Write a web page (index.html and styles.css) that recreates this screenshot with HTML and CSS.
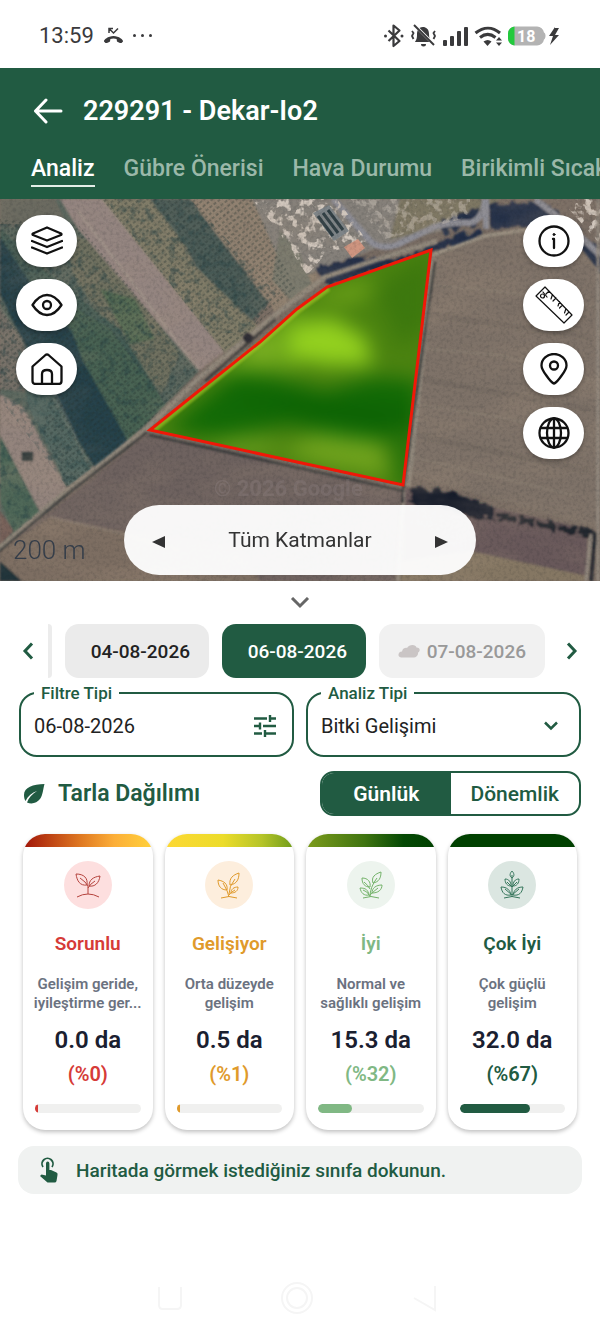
FILE: index.html
```
<!DOCTYPE html>
<html lang="tr">
<head>
    <meta charset="UTF-8">
    <meta name="viewport" content="width=device-width, initial-scale=1">
    <title>229291 - Dekar-Io2</title>
    <link rel="stylesheet" href="styles.css">
</head>
<body>
    <div class="status">
        <span class="status-time">13:59</span>
        <svg width="21" height="18" viewBox="0 0 21 18"><path d="M1 14.500c-.5-1.500 4-5.500 9.500-5.500s10 4 9.500 5.500l-1.500 1.500c-1 .4-3.500-.8-4.500-1.600l-.4-2.400c-2-.7-4.200-.7-6.200 0l-.4 2.400c-1 .8-3.500 2-4.500 1.600z" fill="#3a3a3c"/><path d="M6 6V1.500h4M6.500 2l4 4L15 1.500" fill="none" stroke="#3a3a3c" stroke-width="1.500"/></svg>
        <span class="status-more"><i></i><i></i><i></i></span>
        <svg class="status-icons" width="178" height="26" viewBox="0 0 178 26" fill="none" stroke="#3a3a3c">
            <path d="M5.500 7.500l11 10.500-6 5V2.500l6 5-11 10.500" stroke-width="2.200" stroke-linejoin="round"/>
            <circle cx="2.500" cy="13" r="1.500" fill="#3a3a3c" stroke="none"/><circle cx="19" cy="13" r="1.500" fill="#3a3a3c" stroke="none"/>
            <path d="M32 19h17c-2-2-3-4-3-8 0-5-3-7-6-7-5 0-6 4-6 8s-1 5-2 7zM38 21h5a2.500 2.500 0 0 1-5 0z" fill="#3a3a3c" stroke="none"/>
            <path d="M31 1.500l22 22" stroke="#fff" stroke-width="3"/><path d="M31 2l20 20" stroke-width="2"/>
            <path d="M29 8l1.500 2-1.500 3 1.500 3M52 8l-1.500 2 1.500 3-1.500 3" stroke-width="1.800"/>
            <g fill="#3a3a3c" stroke="none"><rect x="60" y="17" width="4" height="6" rx="1"/><rect x="67" y="13" width="4" height="10" rx="1"/><rect x="74" y="8" width="4" height="15" rx="1"/><rect x="81" y="4" width="4" height="19" rx="1"/></g>
            <path d="M92.500 10c8-6.500 17-6.500 24.500 0M97 14.500c5-4 10.500-4 15.500 0" stroke-width="3"/>
            <path d="M100.500 18.500c3-2 5.500-2 8 0l-4 4.500z" fill="#3a3a3c" stroke="none"/>
            <path d="M113 17.500h6L116 14zM113 19.500h6l-3 3.500z" fill="#3a3a3c" stroke="none"/>
            <path d="M132 3.500h22a7 7 0 0 1 7 6c2 .5 2 6 0 7a7 7 0 0 1-7 6h-22a7 7 0 0 1-7-7v-5a7 7 0 0 1 7-7z" fill="#b3b3b3" stroke="none"/>
            <path d="M131.500 3.500v19a7 7 0 0 1-6.500-7v-5a7 7 0 0 1 6.500-7z" fill="#23ca3d" stroke="none"/>
            <text class="battery" x="134" y="19">18</text>
            <path d="M172 4l-6 9h4l-3 9 9-10h-4l4-7h-4z" fill="#3a3a3c" stroke="none"/>
        </svg>
    </div>

    <header class="header">
        <div class="header-title">
            <button class="back" aria-label="Geri"><svg width="30" height="26" viewBox="0 0 30 26" fill="none" stroke="#fff" stroke-width="3" stroke-linecap="round" stroke-linejoin="round"><path d="M28 13H2.500M13 2L2.500 13 13 24"/></svg></button>
            <h1>229291 - Dekar-Io2</h1>
        </div>
        <nav class="tabs">
            <a class="tab tab-active" href="#analiz">Analiz</a>
            <a class="tab" href="#gubre">Gübre Önerisi</a>
            <a class="tab" href="#hava">Hava Durumu</a>
            <a class="tab" href="#birikimli">Birikimli Sıcaklık</a>
        </nav>
    </header>

    <section class="map">
        <svg class="map-canvas" viewBox="0 0 600 382" preserveAspectRatio="xMidYMid slice">
            <defs>
                <filter id="grain" x="0" y="0" width="100%" height="100%" color-interpolation-filters="sRGB">
                    <feTurbulence type="fractalNoise" baseFrequency=".3" numOctaves="3" seed="4"/>
                    <feColorMatrix values="0 0 0 0 .08  0 0 0 0 .1  0 0 0 0 .12  2 0 0 0 -.85"/>
                </filter>
                <filter id="patches" x="0" y="0" width="100%" height="100%" color-interpolation-filters="sRGB">
                    <feTurbulence type="fractalNoise" baseFrequency=".012 .03" numOctaves="4" seed="9"/>
                    <feColorMatrix values="0 0 0 0 .66  0 0 0 0 .58  0 0 0 0 .5  0 2 0 0 -.8"/>
                </filter>
                <filter id="foliage" x="0" y="0" width="100%" height="100%" color-interpolation-filters="sRGB">
                    <feTurbulence type="fractalNoise" baseFrequency=".13" numOctaves="3" seed="5"/>
                    <feColorMatrix values="0 0 0 0 .15  0 0 0 0 .26  0 0 0 0 .27  0 3 0 0 -1.400" result="n"/>
                    <feComposite in="n" in2="SourceGraphic" operator="in"/>
                </filter>
                <filter id="houses" x="0" y="0" width="100%" height="100%" color-interpolation-filters="sRGB">
                    <feTurbulence type="fractalNoise" baseFrequency=".12" numOctaves="3" seed="12"/>
                    <feColorMatrix values="0 0 0 0 .82  0 0 0 0 .78  0 0 0 0 .74  0 7 0 0 -3.500" result="n"/>
                    <feComposite in="n" in2="SourceGraphic" operator="in"/>
                </filter>
                <filter id="trees" x="-5%" y="-5%" width="110%" height="110%">
                    <feTurbulence type="fractalNoise" baseFrequency=".12" numOctaves="2" seed="2" result="n"/>
                    <feDisplacementMap in="SourceGraphic" in2="n" scale="12" xChannelSelector="R" yChannelSelector="G"/>
                </filter>
                <filter id="soft" x="-40%" y="-40%" width="180%" height="180%" color-interpolation-filters="sRGB"><feGaussianBlur stdDeviation="10"/></filter>
                <filter id="edge"><feGaussianBlur stdDeviation="1"/></filter>
                <pattern id="rows" width="5" height="5" patternUnits="userSpaceOnUse" patternTransform="rotate(-38)"><path d="M0 1h5" stroke="#26332f" stroke-width="2" stroke-dasharray="3 2" opacity=".3"/></pattern>
                <clipPath id="plot"><path d="M149 231L260 141 297 109 327 87 431 51 403 287z"/></clipPath>
            </defs>
            <rect width="600" height="382" fill="#786c63"/>
            <g filter="url(#edge)">
                <!-- orchards west of the track -->
                <path d="M0 0h63l137 171-55 56-78 61-67 62z" fill="#5b685e"/>
                <path d="M0 0h55l14 30-69-2z" fill="#6b6a60"/>
                <path d="M70 35l30 10 80 110-18 40-50-60-40-60z" fill="#6f7161"/>
                <path d="M100 90l35 10 20 40-25 5z" fill="#596d54"/>
                <path d="M0 30l60 55 60 45 45 75-37 37-65-120L0 90z" fill="#455d54"/>
                <path d="M0 38l30 45 52 62 40 85 6 12-32 28-48-73L0 95z" fill="#28434c"/>
                <path d="M60 100l50 30 55 75-37 37-45-80z" fill="#496353"/>
                <path d="M0 108l25 36 8 50L0 190z" fill="#757067"/>
                <path d="M18 150l36 45 38 75-24 18-40-80z" fill="#506560"/>
                <path d="M0 195l24 14 44 82-28 22L0 236z" fill="#93847d"/>
                <path d="M0 238l40 76-27 20L0 300z" fill="#4f6858"/>
                <path d="M0 312l14 20-14 15z" fill="#745e59"/>
                <path d="M60 0h42l123 152-26 20L78 30z" fill="#948580"/>
                <path d="M78 12l120 158M102 0l120 148" fill="none" stroke="#a99d92" stroke-width="2" opacity=".7"/>
                <path d="M0 108l20 30 36 58 36 76M54 200l38 72" fill="none" stroke="#7f8577" stroke-width="1" opacity=".7"/>
                <!-- orchard and scrub east of it -->
                <path d="M102 0h50l108 130-35 24z" fill="#807b67"/>
                <path d="M150 0h42l84 94-24 28-56-54-10-20z" fill="#4d5d58"/>
                <path d="M190 0h66l44 40 20 44-44 30z" fill="#8f8070"/>
                <!-- village -->
                <path d="M252 0h240l-20 25-85 20-90 35-18-20z" fill="#85807a"/>
                <path d="M400 0h100l-20 20-90 20z" fill="#7d7763"/>
                <path d="M280 30l20 25 12 30-22 16-18-20z" fill="#77786c"/>
                <path d="M316 68l40-10 40 2 60-24 25-4v8l-50 12-102 36z" fill="#222d46" filter="url(#trees)"/>
                <path d="M440 22l40-14v16l-36 10zM488 4l62 2 50 46v22l-50-48-60 4z" fill="#27324a" filter="url(#trees)"/>
                <path d="M333 0l38 43q10 8 26 3l37-18q15-5 36-4 14-4 15-24M486 0v30M535 0q32 24 65 56" fill="none" stroke="#8e8e96" stroke-width="6"/>
            </g>
            <path d="M252 0h85l30 42-40 12-20 22-30-46z" fill="#000" filter="url(#houses)"/>
            <path d="M350 0h120v18l-85 22z" fill="#000" filter="url(#houses)" opacity=".45"/>
            <path d="M560 0h40v45z" fill="#000" filter="url(#houses)"/>
            <path d="M313 14l16-8 20 26-15 10z" fill="#7d8488"/>
            <path d="M318 17l15 20M323 14l15 20M328 11l15 20" stroke="#2b3b42" stroke-width="3"/>
            <path d="M344 48l14-8 7 9-13 10z" fill="#cf9580"/>
            <g filter="url(#edge)">
                <!-- eastern field -->
                <path d="M432 56l50-18 80-13 38 48v257l-192-54z" fill="#7e7268"/>
                <path d="M426 150l74 6 95 26M418 206l80 12 96 19M432 86l120 12 46 10M412 258l160 38" fill="none" stroke="#96897c" stroke-width="1.500" opacity=".5"/>
                <path d="M432 116l160 22M420 180l170 30M414 236l175 36" fill="none" stroke="#645a54" stroke-width="5" opacity=".25"/>
                <path d="M432 56l52-19 66-10" fill="none" stroke="#9c9384" stroke-width="3"/>
                <path d="M405 288l182 42v50H405z" fill="#67595a"/>
                <path d="M470 352l117 25v5H400v-20z" fill="#857764"/>
                <path d="M410 288l46 6 38 14 2 12-32-4-54-10z" fill="#151b2a" filter="url(#trees)"/>
                <path d="M498 316l100 21" stroke="#1b202c" stroke-width="8" stroke-dasharray="18 3" filter="url(#trees)"/>
                <path d="M404 290l-6 92M591 335l-5 47M598 0v382" stroke="#938a80" stroke-width="3"/>
                <path d="M595 335l-4 47M401 290l1 14" stroke="#272b31" stroke-width="4"/>
                <!-- southern field and the farm road -->
                <path d="M149 234l253 56-8 92H0v-28z" fill="#6e625e"/>
                <path d="M0 352l50-34 60 12 130 18 20 34H0z" fill="#7d6e62"/>
                <path d="M50 318l70 16 60 18" fill="none" stroke="#93857a" stroke-width="2" opacity=".6"/>
                <path d="M0 362l22 20H0z" fill="#24343a"/>
                <path d="M-4 352l71-60 80-63 53-51 75-62 50-38 60-20 52-16M433 60l-25 228" fill="none" stroke="#91887c" stroke-width="5"/>
                <path d="M-4 355l71-60 80-62M149 236l254 56L435 62M205 182l70-62" fill="none" stroke="#2b3033" stroke-width="3" opacity=".75"/>
                <rect x="22" y="253" width="11" height="9" fill="#333a3a"/>
                <circle cx="248" cy="139" r="5" fill="#2b2a32"/>
            </g>
            <path d="M0 0h600v382H0z" filter="url(#patches)" opacity=".25"/>
            <path d="M0 25l60 0 135 146-50 56-78 61L0 200zM105 0h85l86 94-28 40-40 0zM0 238l40 76-27 20L0 300z" fill="#000" filter="url(#foliage)" opacity=".5"/>
            <path d="M60 170L0 195V20L78 25l120 146-53 56-78 61-25-60zM102 0h150l44 90-71 64z" fill="url(#rows)"/>
            <path d="M0 0h600v382H0z" filter="url(#grain)" opacity=".16"/>
            <g clip-path="url(#plot)">
                <path d="M140 40h300v260H140z" fill="#4b8310"/>
                <g filter="url(#soft)">
                    <path d="M165 232l70-58 40 4 50 14 50-14 45 4v60l-70-2-60-14-70 12z" fill="#126906"/>
                    <path d="M225 200l90-4 100 15v28l-110-18z" fill="#0d6304"/>
                    <path d="M372 90l60-40v70l-30 30z" fill="#3d780e"/>
                    <path d="M215 172l75-62 30 10-20 50z" fill="#6aa31a"/>
                    <path d="M290 130l40-12 35 20 8 28-50 0-36-10z" fill="#93d01f"/>
                    <ellipse cx="262" cy="148" rx="16" ry="14" fill="#7bb022"/>
                    <path d="M300 100l60-18 20 6-30 18z" fill="#6ba018"/>
                    <path d="M280 252l40-18 60 8 10 36-60-10z" fill="#6fa21d"/>
                    <ellipse cx="245" cy="247" rx="34" ry="9" fill="#659a1c"/>
                    <path d="M388 230h30v60h-20z" fill="#27720a"/>
                </g>
                <path d="M149 231L260 141 297 109 327 87" fill="none" stroke="#b4cf2c" stroke-width="11" opacity=".55" filter="url(#edge)"/>
            </g>
            <path d="M150 231L260 143 297 110 327 88 431 51 403 286z" fill="none" stroke="#f01808" stroke-width="3"/>
            <text class="watermark" x="214" y="297">© 2026 Google</text>
        </svg>

        <div class="map-tools map-tools-left">
            <button class="tool" aria-label="Katmanlar"><svg viewBox="0 0 32 32"><path d="M16 2.500L2 8.500q-1 .8 0 1.500l14 5.500L30 10q1-.7 0-1.500zM1 16l15 6 15-6M1 22.500l15 6 15-6"/></svg></button>
            <button class="tool" aria-label="Görünüm"><svg viewBox="0 0 32 32"><path d="M1.500 16Q8 6 16 6t14.500 10Q24 26 16 26T1.500 16z"/><circle cx="16" cy="16" r="4"/></svg></button>
            <button class="tool" aria-label="Ana sayfa"><svg viewBox="0 0 32 32"><path d="M1.500 13.500L14.500 2q1.500-1.200 3 0l13 11.500V28q0 3-3 3h-23q-3 0-3-3zM11 31V21q0-4 5-4t5 4v10"/></svg></button>
        </div>
        <div class="map-tools map-tools-right">
            <button class="tool" aria-label="Bilgi"><svg viewBox="0 0 32 32"><circle cx="16" cy="16" r="14.500"/><path d="M15 14h1v9"/><circle cx="16" cy="9.500" r="1" fill="#111" stroke-width="1"/></svg></button>
            <button class="tool" aria-label="Ölçüm"><svg class="ruler" viewBox="0 0 38 38"><path d="M10 1l27 28-8 8L1 10zM14 5l-3 3M17.500 8.500L16 13M21 12l-3 3M24.500 15.500L23 20M27.500 19l-3 3M31 22.500L29.500 27M34 26l-3 3"/><circle cx="7.500" cy="10" r="2"/><path d="M8 6l4 5"/></svg></button>
            <button class="tool" aria-label="Konum"><svg viewBox="0 0 32 32"><path d="M16 30.500Q13.500 30 8 22 3.500 16 3.500 12.500a12.500 11.500 0 0 1 25 0Q28.500 16 24 22q-5.500 8-8 8.500z"/><circle cx="16" cy="12.500" r="4"/></svg></button>
            <button class="tool" aria-label="Dünya"><svg viewBox="0 0 32 32"><circle cx="16" cy="16" r="14.500"/><ellipse cx="16" cy="16" rx="7" ry="14.500"/><path d="M3 11h26M3 21h26M16 1.500v29"/></svg></button>
        </div>

        <span class="scale">200 m</span>
        <div class="layers">
            <button aria-label="Önceki katman"><svg width="14" height="14" viewBox="0 0 14 14"><path d="M0 7l13-6v12z"/></svg></button>
            <span>Tüm Katmanlar</span>
            <button aria-label="Sonraki katman"><svg width="14" height="14" viewBox="0 0 14 14"><path d="M14 7L1 1v12z"/></svg></button>
        </div>
    </section>

    <main class="panel">
        <button class="collapse" aria-label="Daralt"><svg width="20" height="12" viewBox="0 0 20 12" fill="none" stroke="#666" stroke-width="3"><path d="M2 1l8 8 8-8"/></svg></button>

        <div class="dates">
            <button class="arrow" aria-label="Önceki"><svg width="12" height="18" viewBox="0 0 12 18"><path d="M10 1.500L3 9l7 7.500"/></svg></button>
            <div class="chips">
                <span class="chip-rest"></span>
                <button class="chip">04-08-2026</button>
                <button class="chip chip-active">06-08-2026</button>
                <button class="chip chip-cloudy"><svg width="22" height="14" viewBox="0 0 22 14"><path d="M3 13.500c-4-.5-3-6 1-6C4.500 4 8 3.500 9 4c2-4 9-4 9.500-.5C23 3.500 22 8 20 8.500c.5 3-2 5-4 5z" fill="#cac5c5"/></svg>07-08-2026</button>
            </div>
            <button class="arrow" aria-label="Sonraki"><svg width="12" height="18" viewBox="0 0 12 18"><path d="M2 1.500L9 9l-7 7.500"/></svg></button>
        </div>

        <div class="filters">
            <fieldset class="field">
                <legend><label for="filter">Filtre Tipi</label></legend>
                <div class="field-row">
                    <input id="filter" type="text" value="06-08-2026" readonly>
                    <svg width="24" height="24" viewBox="0 0 24 24" fill="none" stroke="#215b42" stroke-width="2.400"><path d="M1 4.500h13M17 4.500h6M17 1v7M1 12h6M10 12h13M7 8.500v7M1 19.500h8M12 19.500h11M12 16v7"/></svg>
                </div>
            </fieldset>
            <fieldset class="field">
                <legend><label for="analysis">Analiz Tipi</label></legend>
                <div class="field-row field-row-select">
                    <select id="analysis"><option>Bitki Gelişimi</option></select>
                    <svg width="14" height="10" viewBox="0 0 14 10" fill="none" stroke="#215b42" stroke-width="2.500"><path d="M1 1.500l6 6 6-6"/></svg>
                </div>
            </fieldset>
        </div>

        <div class="section-head">
            <svg width="21" height="20" viewBox="0 0 21 20"><path d="M20.500 0C9 .5 0 3 0 11c0 3 .8 5 1.500 6C4 12 8 8.500 13 7 8 10 4.500 14 3 18.500c5 2 10 .5 13-3.500 3-4 3-10 4.500-15z" fill="#215b42"/></svg>
            <h2>Tarla Dağılımı</h2>
            <div class="toggle">
                <button class="toggle-on">Günlük</button>
                <button>Dönemlik</button>
            </div>
        </div>

        <div class="cards">
            <button class="card card-bad">
                <span class="card-strip"></span>
                <span class="card-icon"><svg viewBox="0 0 32 32"><path d="M5 28q11-6 22 0M16 25V17Q14 13 8 9M16 19q2-4 7-7M15 16C8 17 5 12 4 5c8 0 12 4 11 11zM17 17c0-6 4-9 11-10-1 7-5 11-11 10z"/></svg></span>
                <span class="card-name">Sorunlu</span>
                <span class="card-text">Gelişim geride, iyileştirme ger...</span>
                <span class="card-value">0.0 da</span>
                <span class="card-percent">(%0)</span>
                <span class="bar"><i style="width: 3%"></i></span>
            </button>
            <button class="card card-growing">
                <span class="card-strip"></span>
                <span class="card-icon"><svg viewBox="0 0 32 32"><path d="M8 29q8-3 16 0M16 28q-1-6-6-14M16 25q0-8 6-15M16 26q2-3 6-5M14 21C8 21 5 17 5 11c6 1 10 4 9 10zM17 16c-1-7 3-10 9-12 0 6-2 11-9 12zM18 24c0-4 3-6 7-6 0 4-3 6-7 6z"/></svg></span>
                <span class="card-name">Gelişiyor</span>
                <span class="card-text">Orta düzeyde gelişim</span>
                <span class="card-value">0.5 da</span>
                <span class="card-percent">(%1)</span>
                <span class="bar"><i style="width: 3%"></i></span>
            </button>
            <button class="card card-good">
                <span class="card-strip"></span>
                <span class="card-icon"><svg viewBox="0 0 32 32"><path d="M8 29q8-3 16 0M15 28q0-10 7-19M15 20q-2-4-6-7M15 27q-3-5-7-6M15 26q4-4 8-7M15 18c-5 0-8-3-8-9 6 0 9 4 8 9zM18 14c-2-6 2-9 8-11 0 6-2 10-8 11zM14 26c-5 1-8-2-9-7 6 0 8 2 9 7zM17 24c0-5 4-8 10-8 0 5-4 8-10 8z"/></svg></span>
                <span class="card-name">İyi</span>
                <span class="card-text">Normal ve sağlıklı gelişim</span>
                <span class="card-value">15.3 da</span>
                <span class="card-percent">(%32)</span>
                <span class="bar"><i style="width: 32%"></i></span>
            </button>
            <button class="card card-best">
                <span class="card-strip"></span>
                <span class="card-icon"><svg viewBox="0 0 32 32"><path d="M8 29q8-3 16 0M16 28V6M16 18l-5-5M16 18l5-5M16 26l-7-6M16 26l7-6M16 9c-3-2-2-5 0-7 2 2 3 5 0 7zM15 17c-4 0-6-3-6-7 4 0 6 3 6 7zM17 17c0-4 2-7 6-7 0 4-2 7-6 7zM15 26c-6 1-9-2-10-8 6 0 9 3 10 8zM17 26c1-5 4-8 10-8-1 6-4 9-10 8z"/></svg></span>
                <span class="card-name">Çok İyi</span>
                <span class="card-text">Çok güçlü gelişim</span>
                <span class="card-value">32.0 da</span>
                <span class="card-percent">(%67)</span>
                <span class="bar"><i style="width: 67%"></i></span>
            </button>
        </div>

        <p class="hint">
            <svg width="20" height="26" viewBox="0 0 20 26"><path d="M4 10a5.500 5.500 0 1 1 9 0" fill="none" stroke="#215b42" stroke-width="1.800"/><path d="M7 6.500q0-2 1.700-2t1.700 2V13h1.600l5.500 2.500q1.500.8 1 2.500L17.500 24q-.3 1.500-2 1.500H8.500L1 19l1.500-1.500 4.500 1z" fill="#215b42"/></svg>
            Haritada görmek istediğiniz sınıfa dokunun.
        </p>
    </main>

    <footer class="navbar">
        <svg width="32" height="32" viewBox="0 0 32 32"><path d="M5 5v18q0 4 4 4h14q4 0 4-4V5"/></svg>
        <svg width="32" height="32" viewBox="0 0 32 32"><circle cx="16" cy="16" r="15"/><circle cx="16" cy="16" r="10"/></svg>
        <svg width="32" height="32" viewBox="0 0 32 32"><path d="M27 4v24L6 16"/></svg>
    </footer>
</body>
</html>
```
FILE: styles.css
```
* {box-sizing: border-box;}
body {
    margin: 0;
    background-color: #fff;
    color: #222;
    font-family: Roboto, "Noto Sans", sans-serif;
}
button, input, select {
    margin: 0;
    padding: 0;
    border: none;
    background: none;
    color: inherit;
    font: inherit;
}
svg {display: block; flex: none;}
h1, h2, p {margin: 0;}

/* status bar */
.status {
    display: flex;
    align-items: center;
    gap: 9px;
    height: 68px;
    padding: 3px 39px 0;
    color: #3a3a3c;
    font-size: 22px;
}
.status-more {display: flex; gap: 5px;}
.status-more i {width: 3px; height: 3px; border-radius: 50%; background-color: #3a3a3c;}
.status-icons {margin-left: auto;}
.battery {font-size: 16px; font-weight: 700; fill: #fff; stroke: none;}

/* header */
.header {
    padding: 22px 0 12px;
    background-color: #215b42;
    color: #fff;
}
.header-title {
    display: flex;
    align-items: center;
    gap: 20px;
    height: 41px;
    padding: 0 33px;
}
.header h1 {font-size: 27px; font-weight: 600;}
.tabs {
    display: flex;
    gap: 29px;
    margin-top: 22px;
    padding-left: 31px;
    overflow: hidden;
}
.tab {
    flex: none;
    height: 34px;
    color: #9bb8a9;
    font-size: 23px;
    font-weight: 500;
    line-height: 31px;
    text-decoration: none;
    white-space: nowrap;
}
.tab-active {border-bottom: 2px solid #e4eee8; color: #fff;}

/* map */
.map {position: relative; height: 382px; overflow: hidden;}
.map-canvas {width: 100%; height: 100%;}
.watermark {font-size: 22px; font-weight: 700; fill: #8d8080; opacity: .35;}
.map-tools {
    position: absolute;
    top: 16px;
    display: flex;
    flex-direction: column;
    gap: 12px;
}
.map-tools-left {left: 16px;}
.map-tools-right {right: 16px;}
.tool {
    display: flex;
    align-items: center;
    justify-content: center;
    width: 61px;
    height: 52px;
    border-radius: 26px;
    background-color: #fff;
    box-shadow: 0 2px 4px rgba(0, 0, 0, .3);
}
.tool svg {
    width: 32px;
    height: 32px;
    fill: none;
    stroke: #111;
    stroke-width: 2.3;
    stroke-linecap: round;
    stroke-linejoin: round;
}
.tool .ruler {width: 38px; height: 38px; stroke-width: 1.2;}
.scale {
    position: absolute;
    left: 13px;
    bottom: 16px;
    color: #343d49;
    font-size: 26px;
    font-weight: 300;
}
.layers {
    position: absolute;
    left: 50%;
    bottom: 6px;
    display: flex;
    align-items: center;
    justify-content: space-between;
    width: 352px;
    height: 70px;
    padding: 0 28px;
    border-radius: 35px;
    background-color: rgba(255, 255, 255, .95);
    color: #333;
    font-size: 21px;
    transform: translateX(-50%);
}
.layers svg {margin-top: 3px; fill: #333;}

/* panel */
.panel {padding: 16px 18px 0;}
.collapse {display: block; margin: 0 auto 15px;}
.dates {
    display: flex;
    align-items: center;
    justify-content: space-between;
    padding: 0 4px;
}
.arrow svg {fill: none; stroke: #215b42; stroke-width: 3;}
.chips {
    display: flex;
    flex: 1;
    gap: 13px;
    margin: 0 14px;
    overflow: hidden;
}
.chip-rest {width: 4px; border-radius: 0 4px 4px 0; background-color: #ececec;}
.chip {
    display: flex;
    align-items: center;
    justify-content: flex-end;
    gap: 7px;
    width: 144px;
    height: 54px;
    padding-right: 19px;
    border-radius: 14px;
    background-color: #ebebeb;
    font-size: 19px;
    font-weight: 500;
}
.chip-active {background-color: #215b42; color: #fff;}
.chip-cloudy {width: 166px; background-color: #f1f1f1; color: #999;}

.filters {
    display: grid;
    grid-template-columns: 1fr 1fr;
    gap: 12px;
    margin: 5px 1px 0;
}
.field {
    min-width: 0;
    margin: 0;
    padding: 2px 15px 8px 13px;
    border: 2px solid #215b42;
    border-radius: 18px;
}
.field legend {
    padding: 0 7px;
    color: #215b42;
    font-size: 17px;
    font-weight: 500;
    line-height: 20px;
}
.field-row {
    display: flex;
    align-items: center;
    justify-content: space-between;
    height: 42px;
    font-size: 20px;
}
.field-row input, .field-row select {
    flex: 1;
    min-width: 0;
    height: 100%;
    padding: 0;
    appearance: none;
}
.field-row-select svg {margin-right: 6px;}

.section-head {
    display: flex;
    align-items: center;
    gap: 13px;
    margin: 14px 1px 18px 6px;
}
.section-head h2 {flex: 1; color: #215b42; font-size: 23px; font-weight: 600;}
.toggle {
    display: grid;
    grid-template-columns: 1fr 1fr;
    width: 261px;
    height: 45px;
    border: 2px solid #215b42;
    border-radius: 14px;
    overflow: hidden;
    color: #215b42;
    font-size: 21px;
    font-weight: 500;
}
.toggle-on {background-color: #215b42; color: #fff; font-weight: 600;}

/* distribution cards */
.cards {
    display: grid;
    grid-template-columns: repeat(4, 1fr);
    gap: 12px;
    padding: 0 5px;
}
.card {
    display: flex;
    flex-direction: column;
    align-items: center;
    padding-bottom: 17px;
    border-radius: 22px;
    background-color: #fff;
    box-shadow: 0 2px 4px rgba(0, 0, 0, .25);
    overflow: hidden;
}
.card-strip {width: 100%; height: 13px;}
.card-icon {
    display: flex;
    align-items: center;
    justify-content: center;
    width: 48px;
    height: 48px;
    margin-top: 14px;
    border-radius: 50%;
}
.card-icon svg {width: 32px; height: 32px; fill: none; stroke: currentColor;}
.card-name {margin-top: 23px; font-size: 19px; font-weight: 600; line-height: 24px;}
.card-text {
    margin-top: 19px;
    padding: 0 8px;
    color: #6b7280;
    font-size: 15px;
    font-weight: 600;
    line-height: 19px;
}
.card-value {margin-top: 12px; color: #1a2030; font-size: 24px; font-weight: 600; line-height: 30px;}
.card-percent {margin-top: 7px; font-size: 20px; font-weight: 600; line-height: 24px;}
.bar {
    align-self: stretch;
    height: 9px;
    margin: 18px 12px 0;
    border-radius: 5px;
    background-color: #f0f0ef;
    overflow: hidden;
}
.bar i {display: block; height: 100%; border-radius: 5px; background-color: currentColor;}

.card-bad {color: #d63b37;}
.card-bad .card-strip {background: linear-gradient(to right, #a01408, #e07a22 45%, #fcae38 70%, #ffd23c);}
.card-bad .card-icon {background-color: #fddfdf; color: #b5433d;}
.card-growing {color: #e09a2b;}
.card-growing .card-strip {background: linear-gradient(to right, #fdd835, #ecdc2a 45%, #b5c428 75%, #6f9c1a);}
.card-growing .card-icon {background-color: #fdeedd;}
.card-good {color: #80b884;}
.card-good .card-strip {background: linear-gradient(to right, #7d9c1c, #3f7410 45%, #044804 75%, #004000);}
.card-good .card-icon {background-color: #edf4ee; color: #74b36a;}
.card-best {color: #215b42;}
.card-best .card-strip {background-color: #004000;}
.card-best .card-icon {background-color: #dbe6e1; color: #35755b;}

.hint {
    display: flex;
    align-items: center;
    gap: 17px;
    height: 48px;
    margin-top: 16px;
    padding: 0 21px;
    border-radius: 16px;
    background-color: #f0f2f1;
    color: #215b42;
    font-size: 19px;
    font-weight: 500;
}

/* system buttons */
.navbar {
    display: flex;
    justify-content: center;
    gap: 95px;
    padding: 88px 6px 19px 0;
}
.navbar svg {fill: none; stroke: #f5f5f5; stroke-width: 2;}
```
